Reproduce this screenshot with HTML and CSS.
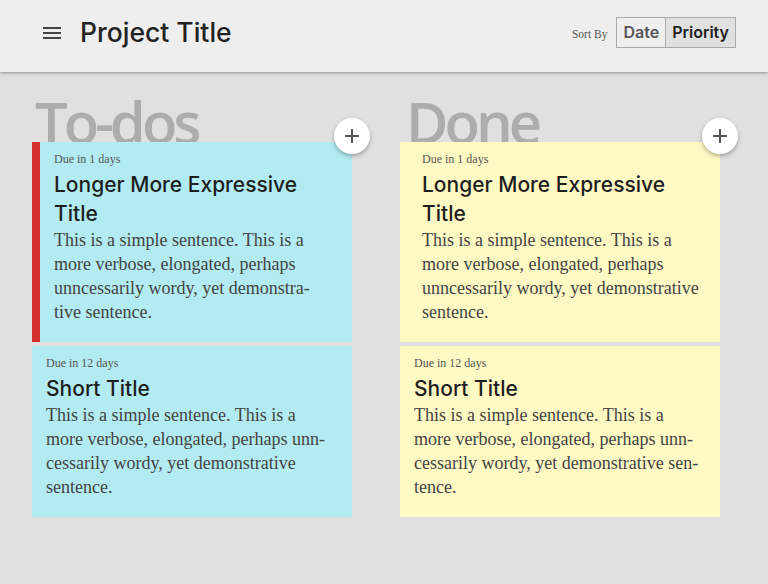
FILE: index.html
```html
<!DOCTYPE html>
<html lang="en">
<head>
<meta charset="utf-8">
<title>Project Title</title>
<link rel="stylesheet" href="styles.css">
</head>
<body>
<header class="app-bar">
  <div class="app-bar-row">
    <button class="menu-btn" aria-label="Menu">
      <svg viewBox="0 0 24 24" width="24" height="24"><path d="M3 18h18v-2H3v2zm0-5h18v-2H3v2zm0-7v2h18V6H3z"/></svg>
    </button>
    <h1 class="app-title">Project Title</h1>
    <div class="sort">
      <span class="sort-label">Sort By</span>
      <div class="sort-group">
        <button class="sort-btn">Date</button>
        <button class="sort-btn active">Priority</button>
      </div>
    </div>
  </div>
</header>
<main class="board">
  <section class="column todo">
    <h2 class="column-title">To-dos</h2>
    <button class="add-btn" aria-label="Add">
      <svg viewBox="0 0 24 24" width="24" height="24"><path d="M19 13h-6v6h-2v-6H5v-2h6V5h2v6h6v2z"/></svg>
    </button>
    <div class="cards">
      <article class="card flagged">
        <div class="due">Due in 1 days</div>
        <h3 class="card-title">Longer More Expressive Title</h3>
        <p class="card-body">This is a simple sentence. This is a<br>more verbose, elongated, perhaps<br>unncessarily wordy, yet demonstra-<br>tive sentence.</p>
      </article>
      <article class="card">
        <div class="due">Due in 12 days</div>
        <h3 class="card-title">Short Title</h3>
        <p class="card-body">This is a simple sentence. This is a<br>more verbose, elongated, perhaps unn-<br>cessarily wordy, yet demonstrative<br>sentence.</p>
      </article>
    </div>
  </section>
  <section class="column done">
    <h2 class="column-title">Done</h2>
    <button class="add-btn" aria-label="Add">
      <svg viewBox="0 0 24 24" width="24" height="24"><path d="M19 13h-6v6h-2v-6H5v-2h6V5h2v6h6v2z"/></svg>
    </button>
    <div class="cards">
      <article class="card flagged">
        <div class="due">Due in 1 days</div>
        <h3 class="card-title">Longer More Expressive Title</h3>
        <p class="card-body">This is a simple sentence. This is a<br>more verbose, elongated, perhaps<br>unncessarily wordy, yet demonstrative<br>sentence.</p>
      </article>
      <article class="card">
        <div class="due">Due in 12 days</div>
        <h3 class="card-title">Short Title</h3>
        <p class="card-body">This is a simple sentence. This is a<br>more verbose, elongated, perhaps unn-<br>cessarily wordy, yet demonstrative sen-<br>tence.</p>
      </article>
    </div>
  </section>
</main>
</body>
</html>
```
FILE: styles.css
```css
* { box-sizing: border-box; }
html, body { margin: 0; padding: 0; }
body {
  background: #e0e0e0;
  font-family: Inter, "Open Sans", "Liberation Sans", sans-serif;
  color: #222;
  width: 768px;
  height: 584px;
  overflow: hidden;
}
.app-bar {
  height: 72px;
  background: #eeeeee;
  box-shadow: 0 1px 3px rgba(0,0,0,0.35);
  position: relative;
  z-index: 2;
}
.app-bar-row {
  height: 64px;
  display: flex;
  align-items: center;
  padding: 0 32px 0 40px;
}
.menu-btn {
  border: 0;
  background: none;
  padding: 0;
  width: 24px;
  height: 24px;
  margin-top: 2px;
  fill: #444;
  display: block;
}
.menu-btn svg { display: block; }
.app-title {
  margin: 0 0 0 16px;
  font-size: 26.5px;
  font-weight: 500;
  color: #222;
  flex: 1;
}
.sort {
  display: flex;
  align-items: baseline;
  gap: 9px;
}
.sort-label {
  font-family: "Liberation Serif", serif;
  font-size: 11.5px;
  color: #555;
}
.sort-group { display: flex; }
.sort-btn {
  font-family: Inter, "Open Sans", "Liberation Sans", sans-serif;
  font-size: 16px;
  font-weight: 600;
  height: 31px;
  padding: 0 6px;
  border: 1px solid #aaa;
  background: #efefef;
  color: #555;
  line-height: 29px;
}
.sort-btn + .sort-btn { border-left: 0; }
.sort-btn.active { background: #e0e0e0; color: #222; }

.board {
  display: flex;
  gap: 48px;
  padding: 0 32px;
}
.column {
  width: 320px;
  position: relative;
}
.column-title {
  margin: 21px 0 -9px 3px;
  font-family: "Open Sans", sans-serif;
  font-size: 58px;
  line-height: 58px;
  font-weight: 600;
  letter-spacing: -4px;
  color: #adadad;
}
.done .column-title { margin-left: 6px; }
.add-btn {
  position: absolute;
  top: 46px;
  right: -18px;
  width: 36px;
  height: 36px;
  border-radius: 50%;
  border: 0;
  background: #fff;
  box-shadow: 0 2px 4px rgba(0,0,0,0.3);
  fill: #555;
  padding: 6px;
  z-index: 3;
}
.add-btn svg { display: block; }
.cards {
  position: relative;
  z-index: 1;
  display: flex;
  flex-direction: column;
  gap: 4px;
}
.card {
  padding: 10px 14px 18px 14px;
}
.todo .card { background: #b2ebf2; }
.done .card { background: #fff9c4; }
.card.flagged { border-left: 8px solid transparent; }
.todo .card.flagged { border-left-color: #d32f2f; }
.done .card.flagged { border-left-color: #fff9c4; }
.due {
  font-family: "Liberation Serif", serif;
  font-size: 12px;
  line-height: 14px;
  color: #555;
}
.card-title {
  margin: 4px 0 0;
  font-size: 21px;
  line-height: 29px;
  font-weight: 500;
  color: #1e1e1e;
}
.card-body {
  margin: 0;
  font-family: "Liberation Serif", serif;
  font-size: 18px;
  line-height: 24px;
  color: #444;
}
```
